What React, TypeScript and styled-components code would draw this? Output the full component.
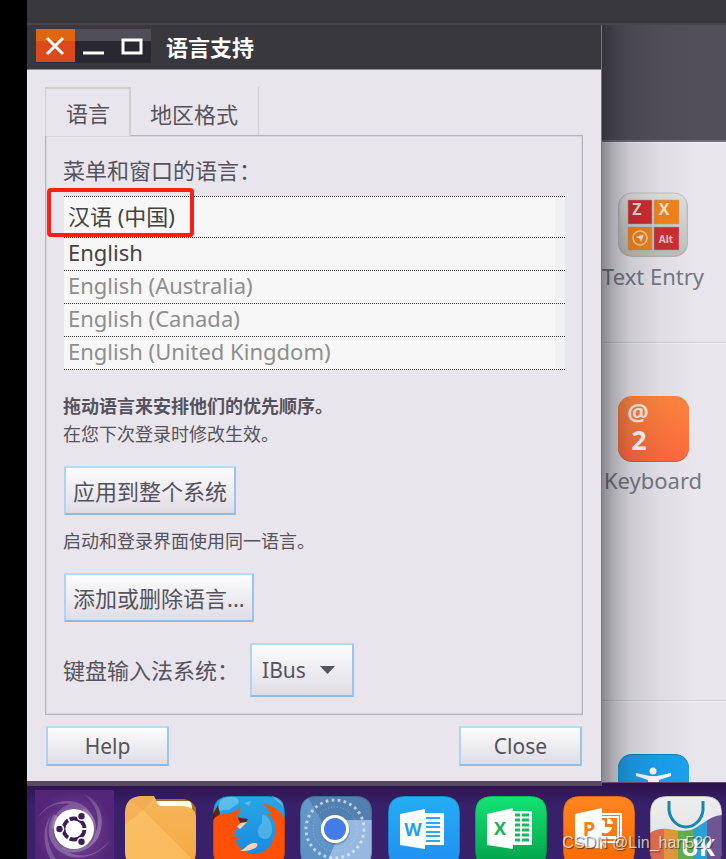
import React from "react";
import styled, { createGlobalStyle, css } from "styled-components";

const ink = "#55525d";
const uiFont = `"Noto Sans", "Noto Sans CJK SC", sans-serif`;

const GlobalStyle = createGlobalStyle`
  *, *::before, *::after { box-sizing: border-box; }
  body { margin: 0; background: #000; }
  button, select { font: inherit; color: inherit; margin: 0; }
  p, h1, ul { margin: 0; padding: 0; }
`;

const Screen = styled.div`
  position: relative;
  display: flex;
  flex-direction: column;
  min-height: 100vh;
  padding-left: 27px;
  background: #000;
  color: ${ink};
  font: 400 22px/28px ${uiFont};
  overflow: hidden;
`;

const TopPanel = styled.div`
  height: 25px;
  background: #39383d;
  border-bottom: 2px solid #47464c;
`;

const Workspace = styled.main`
  flex: 1;
  display: grid;
  grid-template-columns: minmax(0, 1fr) 124px;
`;

const Dialog = styled.section`
  position: relative;
  z-index: 1;
  display: flex;
  flex-direction: column;
  margin-bottom: -4px;
  background: #e8e6ec;
  border-right: 1px solid #77767d;
  border-bottom: 5px solid #584864;
`;

const TitleBar = styled.header`
  display: flex;
  align-items: flex-start;
  gap: 15px;
  height: 45px;
  padding: 4px 9px 0;
  background: #39383d;
  border-bottom: 1px solid #8f8d95;
`;

const WindowControls = styled.div`
  display: flex;
  height: 33px;
  background: linear-gradient(#514e59 0 12px, #29272f 12px);
  box-shadow: 0 1px 0 #2b2a2f;
`;

const ControlButton = styled.button<{ $close?: boolean }>`
  display: flex;
  width: 38px;
  padding: 0;
  border: 0;
  background: none;
  ${(p) => p.$close && css`
    width: 39px;
    background: linear-gradient(#df650f 0 12px, #dc4a1a 12px);
  `}
`;

const Title = styled.h1`
  color: #fff;
  font-size: 22px;
  line-height: 36px;
`;

const DialogBody = styled.div`
  flex: 1;
  display: flex;
  flex-direction: column;
  padding: 17px 18px 15px;
`;

const TabList = styled.div`
  display: flex;
  height: 48px;
`;

const Tab = styled.button<{ $active?: boolean }>`
  padding: 6px 20px 0 19px;
  border: 0;
  border-right: 1px solid #d2d0d6;
  background: none;
  line-height: 28px;
  ${(p) => p.$active && css`
    position: relative;
    height: 49px;
    padding: 1px 19px 0 20px;
    border: 2px solid #d0cecf;
    border-left-width: 1px;
    border-bottom: 0;
    background: #e8e6ec;
  `}
`;

const TabPanel = styled.div`
  flex: 1;
  padding: 20px 17px 17px;
  border: 1px solid #b6b4c0;
  box-shadow: inset 0 0 0 1px #d8d6de;
`;

const LanguageList = styled.ul`
  margin: 12px 0 0 1px;
  list-style: none;
  color: #8e8e8e;
  background: linear-gradient(90deg, #f7f7f7 calc(100% - 10px), #eff1f3 0);
  border-bottom: 1px dotted #333;
`;

const LanguageItem = styled.li<{ $tall?: boolean; $strong?: boolean }>`
  position: relative;
  height: ${(p) => (p.$tall ? 41 : 33)}px;
  padding-left: 4px;
  border-top: 1px dotted #333;
  line-height: ${(p) => (p.$tall ? 39 : 28)}px;
  color: ${(p) => (p.$strong || p.$tall ? "#434343" : "inherit")};
`;

const Marker = styled.span`
  position: absolute;
  top: -9px;
  left: -17px;
  width: 147px;
  height: 49px;
  border: 4px solid #ff2013;
  border-radius: 4px;
`;

const Hint = styled.p<{ $bold?: boolean; $gap?: number }>`
  margin-top: ${(p) => p.$gap ?? 0}px;
  font-size: 18px;
  line-height: 28px;
  font-weight: ${(p) => (p.$bold ? 700 : 400)};
`;

const raised = css`
  border: 2px solid;
  border-color: #b9dbfb #9ac4ee #8ebae6 #aed3f6;
  border-radius: 1px;
  background: linear-gradient(#fcfcfd, #dfdde4);
`;

const ActionButton = styled.button`
  ${raised}
  display: block;
  height: 49px;
  margin: 18px 0 0 1px;
  padding: 1px 7px 0;
  white-space: nowrap;
`;

const FooterButton = styled.button`
  ${raised}
  width: 123px;
  height: 40px;
  padding: 0;
  font-size: 21px;
`;

const InputRow = styled.div`
  display: flex;
  align-items: center;
  gap: 11px;
  margin-top: 21px;
`;

const SelectBox = styled.div`
  position: relative;
  display: flex;
  align-items: center;
`;

const Select = styled.select`
  ${raised}
  appearance: none;
  width: 104px;
  height: 54px;
  padding: 0 30px 0 10px;
  font-size: 21px;
`;

const Caret = styled.svg`
  position: absolute;
  right: 19px;
  pointer-events: none;
`;

const Footer = styled.footer`
  display: flex;
  justify-content: space-between;
  padding: 11px 1px 0;
`;

const Settings = styled.aside`
  position: relative;
  display: grid;
  grid-template-rows: 117px 201px 358px minmax(0, 1fr);
  overflow: hidden;
  background: #e8e6ec;
  &::after {
    content: "";
    position: absolute;
    inset: 0 auto 0 0;
    width: 95px;
    pointer-events: none;
    background: linear-gradient(90deg, rgba(15,18,24,.44), rgba(15,18,24,.27) 12px, rgba(15,18,24,.13) 28px, rgba(15,18,24,.04) 58px, transparent);
  }
`;

const SettingsHeader = styled.div`
  background: #524f5a;
  border-bottom: 2px solid #716e7c;
`;

const SettingsGroup = styled.div<{ $last?: boolean }>`
  display: flex;
  flex-direction: column;
  align-items: flex-start;
  padding-top: 50px;
  border-bottom: ${(p) => (p.$last ? 0 : 1)}px solid #cfcdd6;
  box-shadow: inset 0 1px 0 #f3f2f5;
  overflow: hidden;
  contain: ${(p) => (p.$last ? "size" : "none")};
`;

const SettingsLink = styled.a`
  display: flex;
  flex-direction: column;
  align-items: center;
  gap: 5px;
  width: 102px;
  color: #767883;
  text-decoration: none;
  white-space: nowrap;
  svg { flex: none; }
`;

const LowerLink = styled(SettingsLink)`
  margin-top: 3px;
  gap: 4px;
`;

const Dock = styled.nav`
  display: flex;
  justify-content: space-between;
  align-items: flex-start;
  height: 77px;
  padding: 13px 4px 0 11px;
  background: linear-gradient(#2c134b, #38206a 22px, #3a206c);
  border-top: 1px solid #604978;
  overflow: hidden;
`;

const DockButton = styled.button`
  width: 72px;
  height: 72px;
  padding: 0;
  border: 0;
  background: none;
  svg { display: block; overflow: visible; }
`;

const Watermark = styled.div`
  position: absolute;
  right: 14px;
  bottom: 6px;
  color: rgba(255, 255, 255, 0.72);
  font: 16px/20px "Liberation Sans", sans-serif;
  text-shadow: 1px 1px 1px rgba(40, 40, 40, 0.75);
`;

const tile = "M17 0H55Q72 0 72 17V55Q72 72 55 72H17Q0 72 0 55V17Q0 0 17 0Z";

type TileProps = { id: string; from: string; to: string; children?: React.ReactNode };

function Tile({ id, from, to, children }: TileProps) {
  return (
    <svg width="72" height="72" viewBox="0 0 72 72" aria-hidden="true">
      <defs>
        <linearGradient id={`${id}-g`} x2="0" y2="1">
          <stop stopColor={from} /><stop offset="1" stopColor={to} />
        </linearGradient>
        <clipPath id={`${id}-c`}><path d={tile} /></clipPath>
      </defs>
      <g clipPath={`url(#${id}-c)`}>
        <path d={tile} fill={`url(#${id}-g)`} />
        {children}
        <path d={tile} fill="none" stroke="#000" strokeOpacity=".18" strokeWidth="2" />
      </g>
    </svg>
  );
}

function Letter({ x, y, size, fill, children }: { x: number; y: number; size: number; fill: string; children: string }) {
  return (
    <text x={x} y={y} fontSize={size} fill={fill} fontWeight="700" textAnchor="middle" fontFamily="Open Sans, Noto Sans, sans-serif">
      {children}
    </text>
  );
}

function UbuntuIcon() {
  return (
    <svg width="72" height="72" viewBox="0 0 72 72" aria-hidden="true">
      <defs>
        <radialGradient id="dash"><stop stopColor="#7b4b98" /><stop offset="1" stopColor="#532578" /></radialGradient>
        <linearGradient id="swirl" x2="1" y2="1"><stop stopColor="#fff" stopOpacity=".04" /><stop offset="1" stopColor="#fff" stopOpacity=".34" /></linearGradient>
      </defs>
      <rect x="-3" y="-6" width="79" height="84" fill="url(#dash)" />
      <path d="M0 22C8 6 32 0 46 10C56 17 58 28 56 38L36 33L14 33C14 20 22 11 32 8C20 6 8 10 0 22Z" fill="#fff" opacity=".2" />
      <path d="M46 -2C64 6 68 26 60 42C52 55 36 60 24 52L36 33L46 12C56 18 60 28 57 38C64 24 58 8 46 -2Z" fill="url(#swirl)" />
      <path d="M72 44C62 60 40 66 26 58C10 50 6 32 16 18L36 33L54 42C50 54 40 58 30 56C46 64 60 58 72 44Z" fill="#fff" opacity=".22" />
      <path d="M14 18C6 30 8 51 20 66H14C4 50 4 30 14 18Z" fill="#fff" opacity=".2" />
      <circle cx="36.5" cy="34.5" r="21" fill="#2e1648" opacity=".25" />
      <circle cx="36" cy="33" r="20" fill="#fff" />
      <circle cx="36" cy="33" r="10.5" fill="none" stroke="#3c1d5b" strokeWidth="3.8" />
      <g stroke="#fff" strokeWidth="1.8"><path d="M36 33L50 33M36 33L29 20.5M36 33L29 45.5" /></g>
      <circle cx="36" cy="33" r="8.3" fill="#fff" />
      <g fill="#3c1d5b" stroke="#fff" strokeWidth="1.6"><circle cx="21.5" cy="33" r="4" /><circle cx="43.5" cy="20.2" r="4" /><circle cx="43.5" cy="45.8" r="4" /></g>
    </svg>
  );
}

function FolderIcon() {
  return (
    <svg width="72" height="72" viewBox="0 0 72 72" aria-hidden="true">
      <defs><linearGradient id="folder" x2="0" y2="1"><stop stopColor="#f6b65d" /><stop offset="1" stopColor="#f3a83f" /></linearGradient></defs>
      <path d="M25 3H59Q67 4 71 12V30H25Z" fill="#a76e17" />
      <path d="M30 5H64Q67 6 67 13H30Z" fill="#fff" />
      <path d="M16 0H29L33 8Q34 10 38 10H58Q70 11 71 20V55Q71 72 55 72H16Q0 72 0 55V17Q0 1 16 0Z" fill="url(#folder)" />
      <path d="M0 29L18 14L66 62L58 72H16Q0 72 0 55Z" fill="#ffc66f" opacity=".6" />
      <path d="M6 5L18 14L29 2L28 0H16Q9 1 6 5Z" fill="#e9a650" opacity=".5" />
    </svg>
  );
}

function FirefoxIcon() {
  return (
    <Tile id="firefox" from="#27a7e4" to="#1684df">
      <path d="M7 5C13-1 24 0 26 5C26 9 20 10 16 14C12 13 9 15 4 15Z M58 0L70 10L73 0Z M31 7L38 5L36 10Z" fill="#73c6ed" opacity=".7" />
      <path d="M49 18C56 20 60 28 59 37C57 43 52 45 47 41C43 36 45 31 49 27Z" fill="#73c6ed" opacity=".55" />
      <path d="M0 18L5 9L7 18L0 25Z M22 21L35 23L32 28L23 28Z" fill="#632310" />
      <path d="M0 24C4 19 10 17 17 17C21 16 24 14 28 11L26 17C24 20 25 23 27 26L24 33C21 34 21 37 22 40L27 43L23 44C24 52 33 58 42 58C54 57 60 48 62 38C63 32 62 26 60 23L55 18L58 17L50 7C61 10 68 15 73 24V73H0Z" fill="#ff5008" />
      <path d="M24 31L27 27L34 26L27 33Z M27 55C33 53 34 47 42 47C46 47 45 51 40 53C36 55 31 55 27 55Z" fill="#ffd3b1" />
    </Tile>
  );
}

function ChromiumIcon() {
  return (
    <Tile id="chromium" from="#6598c8" to="#5c90c4">
      <path d="M7 0L23 28L36 24H72V0Z" fill="#5380ae" />
      <path d="M36 24H72V72H24L36 46Z" fill="#97b9df" />
      <circle cx="35" cy="33" r="29" fill="none" stroke="#e4f2ff" strokeWidth="3" strokeDasharray="2.7 3.35" opacity=".7" />
      <circle cx="35" cy="33" r="22" fill="none" stroke="#dceeff" strokeWidth="1" strokeDasharray="1 2" opacity=".4" />
      <circle cx="36" cy="35" r="14" fill="#244569" opacity=".25" />
      <circle cx="35" cy="33" r="14" fill="#fff" />
      <circle cx="35" cy="33" r="11" fill="#437be7" />
    </Tile>
  );
}

function WordIcon() {
  return (
    <Tile id="word" from="#24adf4" to="#208ff2">
      <path d="M37 17H56V49H37Z M12 18L37 13V53L12 49Z" fill="#fff" />
      <path d="M38 22H52M38 27H52M38 31H52M38 36H52M38 40H52M38 45H52" stroke="#2caaf0" strokeWidth="1.8" />
      <Letter x={25} y={40} size={18} fill="#269fef">W</Letter>
    </Tile>
  );
}

function ExcelIcon() {
  return (
    <Tile id="excel" from="#14e374" to="#009f46">
      <path d="M38 15H57V49H38Z M12 18L38 12V53L12 49Z" fill="#fff" />
      <path d="M40 19H54M40 24H54M40 29H54M40 34H54M40 39H54M40 44H54" stroke="#15bc5b" strokeWidth="3" />
      <path d="M46 16V48" stroke="#fff" strokeWidth="2" />
      <Letter x={25} y={39} size={18} fill="#13b354">X</Letter>
    </Tile>
  );
}

function SlidesIcon() {
  return (
    <Tile id="slides" from="#ff8521" to="#fb6900">
      <path d="M39 18H58V42M39 21H55V46H39" fill="none" stroke="#fff" strokeWidth="2" />
      <path d="M12 18L39 12V53L12 48Z" fill="#fff" />
      <path d="M42 25V31H49A7 7 0 1 1 39 24M44 22A7 7 0 0 1 50 28H44Z M39 40H53V43H39Z" fill="#fff" />
      <Letter x={26} y={40} size={20} fill="#fb7c1b">P</Letter>
    </Tile>
  );
}

function BagIcon() {
  const wave = "M0 37Q7 32 19 33Q31 36 41 34C52 30 58 20 72 19V72H0Z";
  return (
    <Tile id="bag" from="#eeeeee" to="#ddd">
      <clipPath id="bag-wave"><path d={wave} /></clipPath>
      <g clipPath="url(#bag-wave)">
        <path d="M0 0H14V72H0Z" fill="#d96a50" /><path d="M14 0H28V72H14Z" fill="#df963f" />
        <path d="M28 0H43V72H28Z" fill="#65ac49" /><path d="M43 0H57V72H43Z" fill="#2d9fd5" />
        <path d="M57 0H72V72H57Z" fill="#6f5592" />
      </g>
      <path d="M19 5V14C20 24 28 31 36 31C44 31 52 24 53 14V5" fill="none" stroke="#1687b5" strokeWidth="3" />
      <Letter x={48} y={60} size={24} fill="#fff">UK</Letter>
    </Tile>
  );
}

function TextEntryIcon() {
  return (
    <svg width="70" height="65" viewBox="0 0 70 65" aria-hidden="true">
      <defs><linearGradient id="entry" x2="0" y2="1"><stop stopColor="#e2e2e1" /><stop offset="1" stopColor="#bebebd" /></linearGradient></defs>
      <rect x="0" y="1" width="70" height="64" rx="14" fill="#b4b4b5" />
      <rect x="1" y="1" width="68" height="62" rx="13" fill="url(#entry)" stroke="#c2c2c2" />
      <g stroke="#aaa" strokeOpacity=".5">
        <path d="M10 8H34V32H10Z M36 35H61V58H36Z" fill="#d22b32" />
        <path d="M36 8H61V32H36Z M10 35H34V58H10Z" fill="#f48319" />
      </g>
      <Letter x={19} y={23} size={16} fill="#f4dddd">Z</Letter>
      <Letter x={46} y={23} size={16} fill="#fae7d4">X</Letter>
      <Letter x={48} y={51} size={10} fill="#f4c8c8">Alt</Letter>
      <circle cx="22" cy="46" r="7" fill="none" stroke="#f5d0aa" strokeWidth="1.5" />
      <path d="M17.5 45L26 42.5L23 50L21.5 46.5Z" fill="#fae7d4" />
    </svg>
  );
}

function KeyboardIcon() {
  return (
    <svg width="71" height="66" viewBox="0 0 71 66" aria-hidden="true">
      <defs><linearGradient id="keys" x2="0" y2="1"><stop stopColor="#ff863f" /><stop offset="1" stopColor="#ff693d" /></linearGradient></defs>
      <rect y="1" width="71" height="65" rx="14" fill="#bf6845" />
      <rect width="71" height="65" rx="14" fill="url(#keys)" />
      <Letter x={20} y={25} size={24} fill="#fff0e4">@</Letter>
      <Letter x={21} y={54} size={27} fill="#fff">2</Letter>
    </svg>
  );
}

function AccessIcon() {
  return (
    <svg width="71" height="66" viewBox="0 0 71 66" aria-hidden="true">
      <rect width="71" height="66" rx="14" fill="#167fbd" />
      <rect y="1" width="71" height="65" rx="14" fill="#1aa1ef" />
      <circle cx="35" cy="17" r="3.5" fill="#fff" />
      <path d="M18 19L32 22H39L53 19V22L41 26V46H30V26L18 22Z" fill="#fff" />
    </svg>
  );
}

const regions = ["English (Australia)", "English (Canada)", "English (United Kingdom)"];

const launchers = [
  { label: "Ubuntu", Icon: UbuntuIcon },
  { label: "Files", Icon: FolderIcon },
  { label: "Firefox", Icon: FirefoxIcon },
  { label: "Chromium", Icon: ChromiumIcon },
  { label: "Writer", Icon: WordIcon },
  { label: "Spreadsheets", Icon: ExcelIcon },
  { label: "Presentation", Icon: SlidesIcon },
  { label: "Software", Icon: BagIcon },
];

export default function App() {
  return (
    <Screen>
      <GlobalStyle />
      <TopPanel />
      <Workspace>
        <Dialog aria-labelledby="dialog-title">
          <TitleBar>
            <WindowControls>
              <ControlButton $close aria-label="Close window">
                <svg width="39" height="33"><path d="M11 9L27 25M27 9L11 25" stroke="#fff" strokeWidth="3" /></svg>
              </ControlButton>
              <ControlButton aria-label="Minimize">
                <svg width="38" height="33"><path d="M8 24H29" stroke="#fff" strokeWidth="3" /></svg>
              </ControlButton>
              <ControlButton aria-label="Maximize">
                <svg width="38" height="33"><rect x="10" y="11" width="18" height="13" fill="none" stroke="#fff" strokeWidth="3" /></svg>
              </ControlButton>
            </WindowControls>
            <Title id="dialog-title">语言支持</Title>
          </TitleBar>
          <DialogBody>
            <TabList role="tablist">
              <Tab $active role="tab" aria-selected="true" id="tab-language" aria-controls="panel-language">语言</Tab>
              <Tab role="tab" aria-selected="false">地区格式</Tab>
            </TabList>
            <TabPanel role="tabpanel" id="panel-language" aria-labelledby="tab-language">
              <p>菜单和窗口的语言：</p>
              <LanguageList>
                <LanguageItem $tall>汉语 (中国)<Marker /></LanguageItem>
                <LanguageItem $strong>English</LanguageItem>
                {regions.map((name) => <LanguageItem key={name}>{name}</LanguageItem>)}
              </LanguageList>
              <Hint $bold $gap={22}>拖动语言来安排他们的优先顺序。</Hint>
              <Hint>在您下次登录时修改生效。</Hint>
              <ActionButton>应用到整个系统</ActionButton>
              <Hint $gap={12}>启动和登录界面使用同一语言。</Hint>
              <ActionButton>添加或删除语言...</ActionButton>
              <InputRow>
                <label htmlFor="input-method">键盘输入法系统：</label>
                <SelectBox>
                  <Select id="input-method" defaultValue="IBus"><option>IBus</option></Select>
                  <Caret width="15" height="8" aria-hidden="true"><path d="M0 0H15L7.5 8Z" fill={ink} /></Caret>
                </SelectBox>
              </InputRow>
            </TabPanel>
            <Footer>
              <FooterButton>Help</FooterButton>
              <FooterButton>Close</FooterButton>
            </Footer>
          </DialogBody>
        </Dialog>
        <Settings>
          <SettingsHeader />
          <SettingsGroup>
            <SettingsLink href="#text-entry"><TextEntryIcon />Text Entry</SettingsLink>
          </SettingsGroup>
          <SettingsGroup>
            <LowerLink href="#keyboard"><KeyboardIcon />Keyboard</LowerLink>
          </SettingsGroup>
          <SettingsGroup $last>
            <LowerLink href="#access" aria-label="Universal Access"><AccessIcon /></LowerLink>
          </SettingsGroup>
        </Settings>
      </Workspace>
      <Dock aria-label="Launcher">
        {launchers.map(({ label, Icon }) => (
          <DockButton key={label} aria-label={label}><Icon /></DockButton>
        ))}
      </Dock>
      <Watermark>CSDN @Lin_han520</Watermark>
    </Screen>
  );
}
